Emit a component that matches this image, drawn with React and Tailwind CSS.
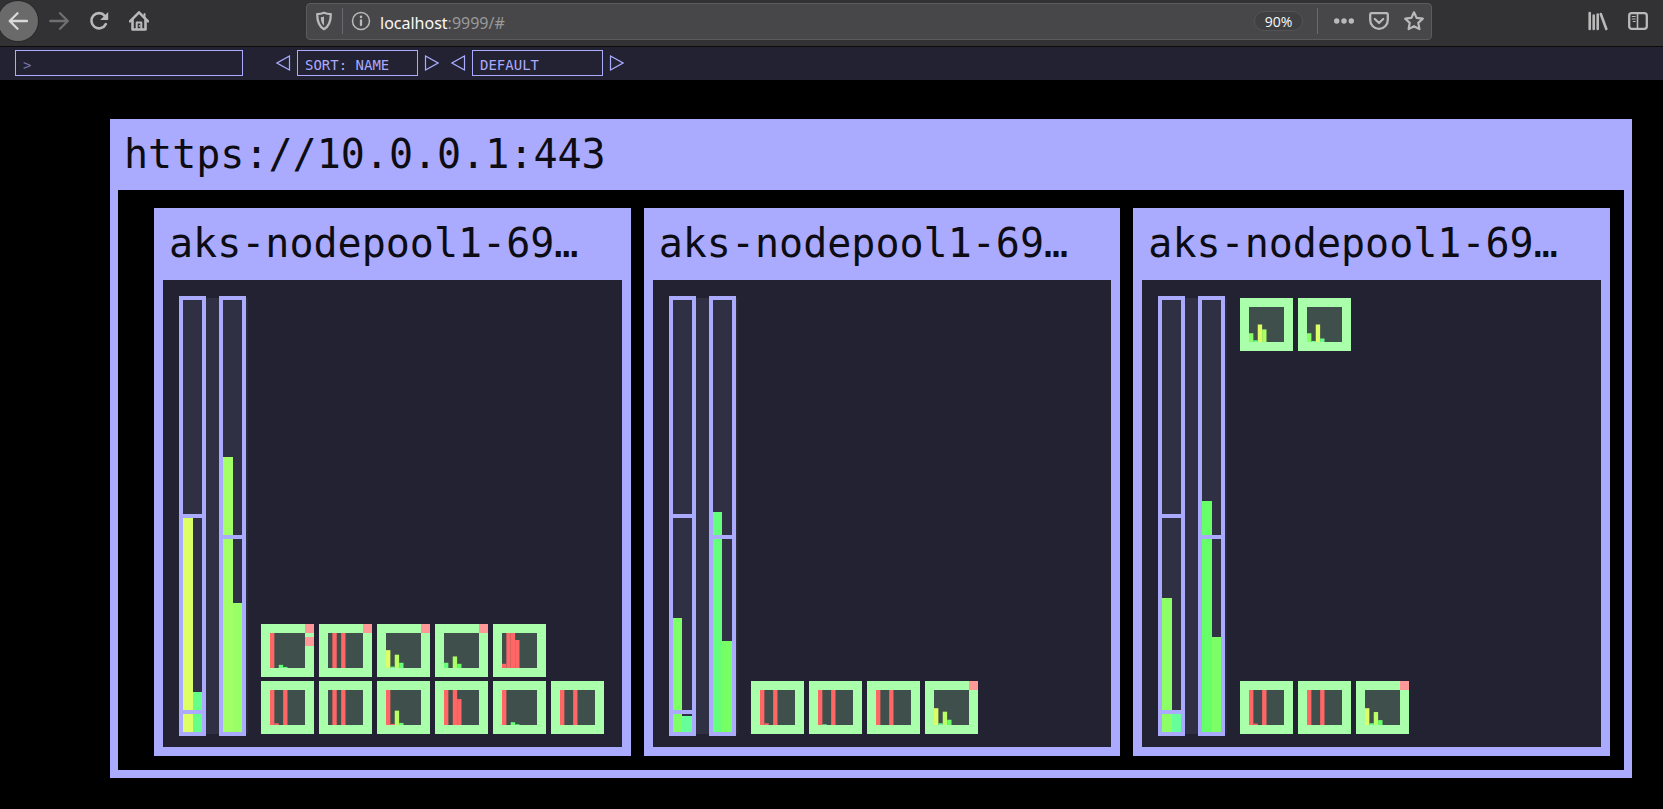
const RED = '#ff6666';
const YELLOW = '#ddff66';
const LIME = '#bbff66';
const GREEN = '#66ff77';
const TEAL = '#66ff99';

// Each pod: bars as [column, height %, colour], plus the number of warning marks.
const p = (bars, marks = 0) => ({ bars, marks });

const NODES = [
  {
    cpu: { used: [[49.5, YELLOW], [9.3, '#66ff88']], limits: [214, 18] },
    mem: { used: [[63.7, '#a3ff66'], [29.9, '#99ff66']], limits: [193] },
    top: [],
    bottom: [
      p([[0, 100, RED], [1, 5, RED], [3, 100, RED]]),
      p([[1, 100, RED], [3, 100, RED]]),
      p([[0, 100, RED], [1, 3, RED], [2, 41, LIME], [3, 6, GREEN]]),
      p([[0, 100, RED], [2, 100, RED], [3, 74, RED]]),
      p([[0, 100, RED], [2, 8, GREEN], [3, 2, GREEN]]),
      p([[0, 100, RED], [3, 100, RED]]),
      p([[0, 100, RED], [2, 9, GREEN], [3, 3, GREEN]], 2),
      p([[1, 100, RED], [3, 100, RED]], 1),
      p([[0, 51, YELLOW], [1, 4, TEAL], [2, 38, LIME], [3, 15, GREEN]], 1),
      p([[0, 15, GREEN], [2, 33, '#aaff66'], [3, 12, '#66ff66']], 1),
      p([[0, 12, RED], [1, 100, RED], [2, 100, RED], [3, 80, RED]]),
    ],
  },
  {
    cpu: { used: [[26.4, '#7fff66'], [3.7, TEAL]], limits: [214, 18] },
    mem: { used: [[51, '#66ff7c'], [21.1, '#77ff66']], limits: [193] },
    top: [],
    bottom: [
      p([[0, 100, RED], [1, 5, RED], [3, 100, RED]]),
      p([[0, 100, RED], [1, 2, TEAL], [3, 100, RED]]),
      p([[0, 100, RED], [3, 100, RED]]),
      p([[0, 48, YELLOW], [1, 5, TEAL], [2, 38, LIME], [3, 15, '#66ff66']], 1),
    ],
  },
  {
    cpu: { used: [[31, '#8dff66'], [4.2, TEAL]], limits: [214, 18] },
    mem: { used: [[53.4, '#66ff6a'], [22.1, '#7cff66']], limits: [193] },
    top: [
      p([[0, 25, '#88ff66'], [1, 5, TEAL], [2, 50, YELLOW], [3, 36, '#aaff66']]),
      p([[0, 25, '#88ff66'], [1, 3, TEAL], [2, 50, YELLOW], [3, 10, '#66ff88']]),
    ],
    bottom: [
      p([[0, 100, RED], [1, 4, RED], [3, 100, RED]]),
      p([[0, 100, RED], [3, 100, RED]]),
      p([[0, 48, YELLOW], [1, 5, TEAL], [2, 37, LIME], [3, 14, '#66ff66']], 1),
    ],
  },
];

function Icon({ children, className = 'size-5' }) {
  return (
    <svg viewBox="0 0 20 20" className={className} fill="none" stroke="currentColor" strokeWidth="2.3" strokeLinecap="round" strokeLinejoin="round" aria-hidden="true">
      {children}
    </svg>
  );
}

function NavButton({ label, className = '', children }) {
  return (
    <button type="button" aria-label={label} className={`flex size-10 shrink-0 items-center justify-center rounded-full ${className}`}>
      {children}
    </button>
  );
}

function BrowserBar() {
  return (
    <header className="flex h-[47px] items-center border-b border-[#0c0c0d] bg-[#323234] pb-1 text-[#b9b9ba]">
      <NavButton label="Back" className="-ml-0.5 mr-px bg-[#6a6a6b] text-[#d9d9da] ring-1 ring-[#29292b]">
        <Icon><path d="M19 10H2M9.500 2.200 1.700 10l7.800 7.800" /></Icon>
      </NavButton>
      <NavButton label="Forward" className="text-[#6f6f71]">
        <Icon><path d="M1.200 10h17.500M11 2.200l7.800 7.800-7.800 7.800" /></Icon>
      </NavButton>
      <NavButton label="Reload">
        <Icon>
          <path d="M16.800 13.200A7.600 7.600 0 1 1 15.800 4.800" strokeWidth="2.600" />
          <path d="M19.200 1v8h-8z" fill="currentColor" stroke="none" />
        </Icon>
      </NavButton>
      <NavButton label="Home">
        <Icon>
          <path d="M1 10.300 10 1.300l9 9" strokeWidth="2.500" />
          <path d="M3.500 9v9.500h13V9" strokeWidth="2.600" />
          <path d="M7.700 18v-6.500h4.600V18" strokeWidth="2" />
          <path d="M15.500 3v3.500" strokeWidth="2" />
          <path d="M10.500 14.800v.200" strokeWidth="1.500" />
        </Icon>
      </NavButton>
      <div className="ml-[147px] flex h-[37px] min-w-0 flex-1 items-center rounded-sm border border-[#5b5b5d] bg-[#474749] px-[7px]">
        <Icon>
          <path d="M10 1.800c2.300 1 4.500 1.400 6.800 1.400 0 6.800-1.200 11.800-6.800 15-5.600-3.200-6.800-8.200-6.800-15 2.300 0 4.500-.400 6.800-1.400z" />
          <path d="M10 5.500v9c-2.300-1.800-3.200-4.600-3.200-8.300 1.200-.100 2.200-.300 3.200-.700z" fill="currentColor" stroke="none" />
        </Icon>
        <span className="ml-2 h-[26px] w-px bg-[#6a6a6e]" />
        <Icon className="ml-2 size-5">
          <circle cx="10" cy="10" r="8.500" strokeWidth="1.500" />
          <path d="M10 9.500v4.500" strokeWidth="2.300" />
          <path d="M10 5.800v.100" strokeWidth="2.500" />
        </Icon>
        <div className="ml-[9px] flex-1 truncate pt-1 font-['Noto_Sans','Open_Sans',sans-serif] text-base leading-6 text-[#9a9a9b]">
          <span className="text-[#f9f9fa]">localhost</span>:9999/#
        </div>
        <button type="button" className="flex h-5 w-[49px] items-center justify-center rounded-full border border-[#535355] bg-[#404042] pt-px font-['Open_Sans','Noto_Sans',sans-serif] text-sm text-[#f9f9fa]">
          90%
        </button>
        <span className="ml-[14px] h-[26px] w-px bg-[#6a6a6e]" />
        <div className="ml-4 flex gap-[15px]">
          <button type="button" aria-label="Page actions">
            <Icon>
              <g fill="currentColor" stroke="none">
                <circle cx="2.700" cy="10" r="2.700" />
                <circle cx="10" cy="10" r="2.700" />
                <circle cx="17.300" cy="10" r="2.700" />
              </g>
            </Icon>
          </button>
          <button type="button" aria-label="Save to Pocket">
            <Icon>
              <path d="M2.500 2.200h15c.800 0 1.300.500 1.300 1.300V9a8.800 8.800 0 0 1-17.600 0V3.500c0-.800.500-1.300 1.300-1.300z" />
              <path d="M5.800 8 10 12l4.200-4" />
            </Icon>
          </button>
          <button type="button" aria-label="Bookmark this page">
            <Icon>
              <path d="m10 1.300 2.600 5.600 6.200.800-4.500 4.200 1.100 6.200L10 15.200l-5.400 2.900 1.100-6.200L1.200 7.700l6.200-.800z" strokeWidth="2.200" />
            </Icon>
          </button>
        </div>
      </div>
      <div className="ml-[156px] mr-[15px] flex gap-5">
        <button type="button" aria-label="Library">
          <Icon>
            <path d="M1.700 2v16M5.700 4.500V18M9.700 3.500V18M12.800 3 18.300 18" strokeWidth="2.600" />
          </Icon>
        </button>
        <button type="button" aria-label="Sidebars">
          <Icon>
            <rect x="1.200" y="2.200" width="17.600" height="15.600" rx="2.500" />
            <path d="M9.500 2.500v15" strokeWidth="1.600" />
            <path d="M4.200 5.500h3M4.200 8h3M5.200 10.500h2" strokeWidth="1.200" />
          </Icon>
        </button>
      </div>
    </header>
  );
}

function Arrow({ label, left }) {
  return (
    <button type="button" aria-label={label} className="shrink-0">
      <svg viewBox="0 0 15 16" className="h-4 w-[15px]" fill="none" stroke="#aaaaff" strokeWidth="1.2" aria-hidden="true">
        <path d={left ? 'M13.500 1v14L1 8z' : 'M1.500 1v14L14 8z'} />
      </svg>
    </button>
  );
}

function Picker({ name, value, className }) {
  return (
    <div role="group" aria-label={name} className="flex items-center gap-1.5">
      <Arrow label={`Previous ${name}`} left />
      <output className={`h-[26px] border border-[#aaaaff] pl-[7px] pt-1 text-sm leading-5 text-[#aaaaff] ${className}`}>{value}</output>
      <Arrow label={`Next ${name}`} />
    </div>
  );
}

function MenuBar() {
  return (
    <nav className="flex h-[33px] items-center bg-[#222233] pb-0.5 pl-[15px]">
      <input
        type="text"
        aria-label="Search"
        placeholder=">"
        className="mr-[33px] h-[26px] w-[228px] border border-[#aaaaff] bg-transparent px-[7px] pt-1 text-sm text-[#aaaaff] outline-none placeholder:text-[#7777b0]"
      />
      <div className="flex gap-3">
        <Picker name="sorting" value="SORT: NAME" className="w-[121px]" />
        <Picker name="theme" value="DEFAULT" className="w-[131px]" />
      </div>
    </nav>
  );
}

function Gauge({ label, used, limits }) {
  return (
    <div role="img" aria-label={label} className="h-[440px] w-[27px] border-4 border-[#aaaaff] bg-[#303045]">
      <div className="relative flex h-full items-end">
        {used.map(([height, color], i) => (
          <div key={i} className="flex-1" style={{ height: `${height}%`, backgroundColor: color }} />
        ))}
        {limits.map((bottom) => (
          <div key={bottom} className="absolute inset-x-0 h-1 bg-[#aaaaff]" style={{ bottom }} />
        ))}
      </div>
    </div>
  );
}

function Pod({ bars, marks }) {
  return (
    <div className="relative size-[53px] border-[9px] border-[#aaffaa] bg-[#3f4f4b]">
      <svg viewBox="0 0 8 100" preserveAspectRatio="none" className="size-full" aria-hidden="true">
        {bars.map(([column, height, color]) => (
          <rect key={column} x={column} y={100 - height} width="1" height={height} fill={color} />
        ))}
      </svg>
      {marks > 0 && (
        <div className="absolute -right-[9px] -top-[9px] flex flex-col gap-1">
          {Array.from({ length: marks }, (_, i) => (
            <span key={i} className="size-[9px] bg-[#ff9999]" />
          ))}
        </div>
      )}
    </div>
  );
}

function PodGroup({ pods }) {
  return (
    <div className="flex flex-wrap-reverse gap-x-[5px] gap-y-1">
      {pods.map((pod, i) => (
        <Pod key={i} {...pod} />
      ))}
    </div>
  );
}

function Node({ cpu, mem, top, bottom }) {
  return (
    <article className="min-w-0 flex-1 border-[9px] border-t-0 border-[#aaaaff] bg-[#222233]">
      <h2 className="h-[72px] truncate bg-[#aaaaff] pl-1.5 pt-[11px] text-[40px] leading-[48px] text-[#0c0c12]">aks-nodepool1-69…</h2>
      <div className="flex pb-[11px] pl-4 pt-4">
        <Gauge label="CPU" {...cpu} />
        <div className="my-0.5 w-[13px] bg-[#303045]" />
        <Gauge label="Memory" {...mem} />
        <div className="my-0.5 w-0.5 bg-[#2b2b3f]" />
        <div className="ml-[13px] flex flex-1 flex-col justify-between py-0.5">
          <PodGroup pods={top} />
          <PodGroup pods={bottom} />
        </div>
      </div>
    </article>
  );
}

export default function App() {
  return (
    <div className="min-h-screen bg-black font-['DejaVu_Sans_Mono','Liberation_Mono',monospace]">
      <BrowserBar />
      <MenuBar />
      <main className="pb-8 pl-[110px] pr-[31px] pt-[39px]">
        <section className="border-8 border-t-0 border-[#aaaaff]">
          <h1 className="h-[71px] truncate bg-[#aaaaff] pl-1.5 pt-[11px] text-[40px] leading-[48px] text-[#0c0c12]">https://10.0.0.1:443</h1>
          <div className="flex gap-[13px] pb-[14px] pl-9 pr-[14px] pt-[18px]">
            {NODES.map((node, i) => (
              <Node key={i} {...node} />
            ))}
          </div>
        </section>
      </main>
    </div>
  );
}
